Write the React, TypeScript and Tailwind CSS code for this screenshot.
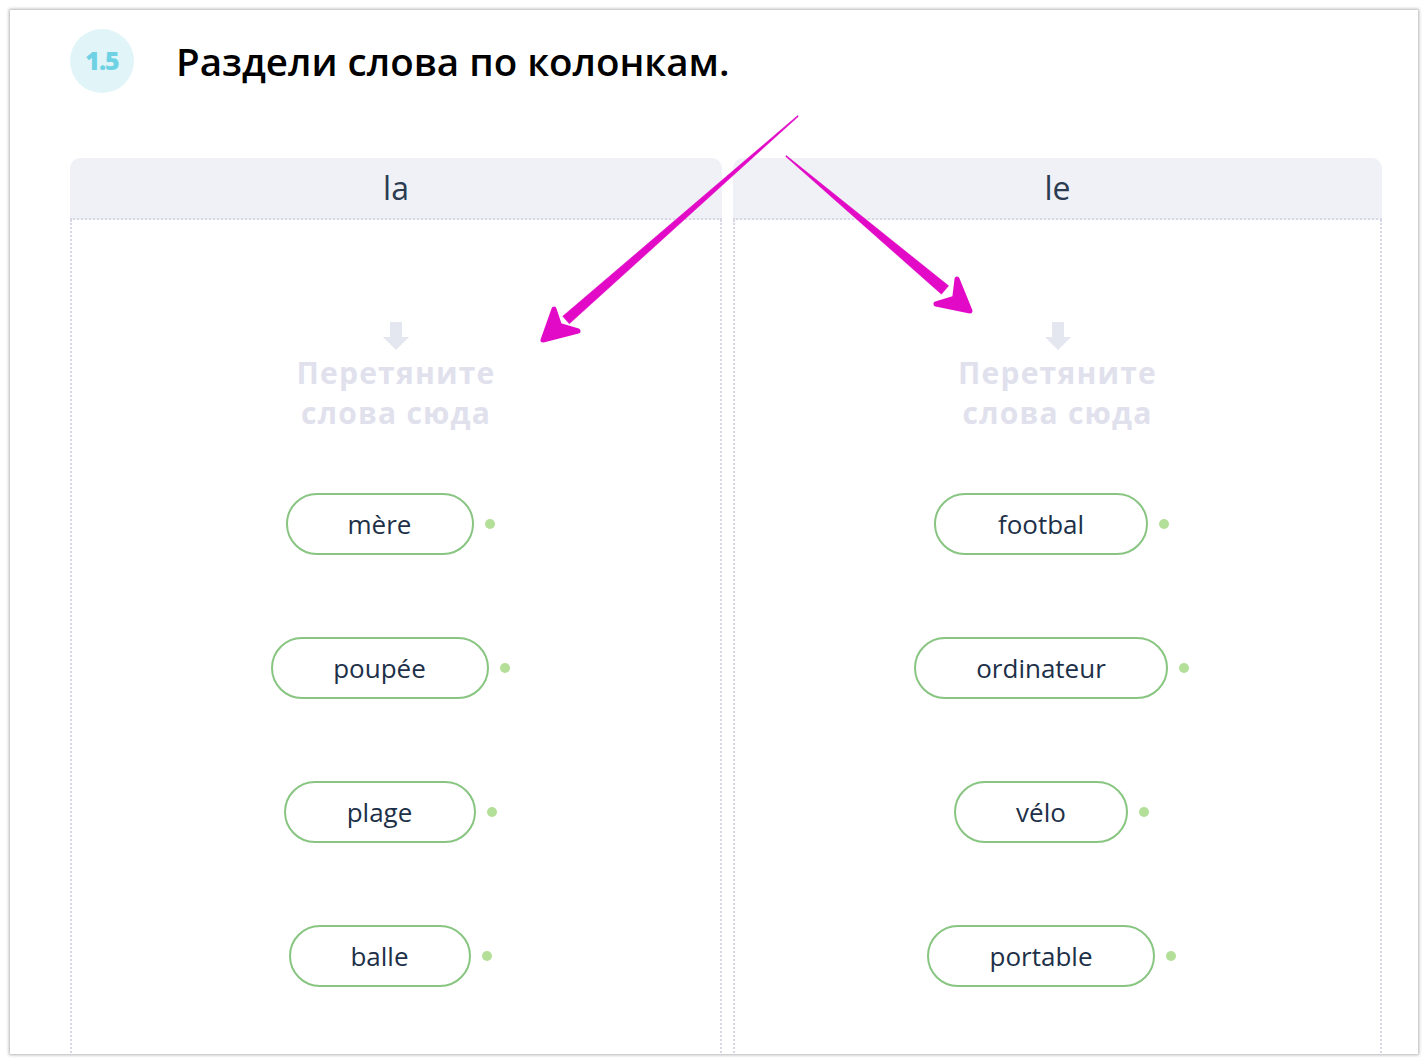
import React from "react";

const left = [
  { w: 188, t: "mère" },
  { w: 218, t: "poupée" },
  { w: 192, t: "plage" },
  { w: 182, t: "balle" },
];
const right = [
  { w: 214, t: "footbal" },
  { w: 254, t: "ordinateur" },
  { w: 174, t: "vélo" },
  { w: 228, t: "portable" },
];

function DropIcon() {
  return (
    <svg width="26" height="28" viewBox="0 0 26 28">
      <path d="M7 0 H19 V15 H26 L13 28 L0 15 H7 Z" fill="#e4e6f0" />
    </svg>
  );
}

function Column({ label, items }: { label: string; items: { w: number; t: string }[] }) {
  return (
    <div className="flex flex-col">
      <div className="h-[62px] bg-[#f0f1f6] rounded-t-[10px] border-b-2 border-dotted border-[#d8d7e6] flex items-center justify-center">
        <span className="text-[32px] text-[#2b3c52] leading-none font-normal">{label}</span>
      </div>
      <div className="h-[900px] border-l-2 border-r-2 border-dotted border-[#d8d7e6] flex flex-col items-center pt-[102px]">
        <DropIcon />
        <div className="mt-[3px] text-center text-[30px] leading-[40px] font-bold text-[#e0e1ed] tracking-[1.2px]">
          Перетяните
          <br />
          слова сюда
        </div>
        <div className="mt-[60px] flex flex-col gap-[82px]">
          {items.map((it) => (
            <div key={it.t} className="flex items-center justify-center">
              <div
                className="h-[62px] rounded-full border-2 border-[#88c581] bg-white flex items-center justify-center text-[26px] text-[#1d3048]"
                style={{ width: it.w }}
              >
                {it.t}
              </div>
              <div className="ml-[11px] mr-[12px] w-[10px] h-[10px] rounded-full bg-[#b4df98]" />
            </div>
          ))}
        </div>
      </div>
    </div>
  );
}

export default function App() {
  return (
    <div
      className="relative w-[1428px] h-[1064px] bg-white p-[10px] overflow-hidden"
      style={{ fontFamily: '"Open Sans", "Noto Sans", sans-serif' }}
    >
      <div className="w-[1408px] h-[1044px] bg-white overflow-hidden shadow-[0_0_3px_1px_rgba(0,0,0,0.3)] pl-[60px] pr-[36px] pt-[19px]">
        <div className="flex items-center gap-[42px]">
          <div className="w-[64px] h-[64px] rounded-full bg-[#e1f5f8] flex items-center justify-center text-[25px] font-extrabold text-[#6fd2e4] tracking-[-1px]">
            1.5
          </div>
          <h1 className="text-[38.5px] font-semibold text-black leading-none">Раздели слова по колонкам.</h1>
        </div>
        <div className="mt-[65px] grid grid-cols-[652px_649px] gap-[11px]">
          <Column label="la" items={left} />
          <Column label="le" items={right} />
        </div>
      </div>
      <svg className="absolute left-0 top-0 pointer-events-none" width="1428" height="1064" viewBox="0 0 1428 1064">
        <g fill="#e20ac6" stroke="#e20ac6" strokeLinejoin="round">
          <polygon points="798.3,116.4 797.7,115.6 562.7,316.2 569.3,323.8" strokeWidth="0.5" />
          <polygon points="543,340 578,331 559.5,325.5 554,309" strokeWidth="5" />
          <polygon points="785.7,156.4 786.3,155.6 948.6,285.8 941.4,294.2" strokeWidth="0.5" />
          <polygon points="970,311 957,279 954.7,298.1 936,304" strokeWidth="5" />
        </g>
      </svg>
    </div>
  );
}
